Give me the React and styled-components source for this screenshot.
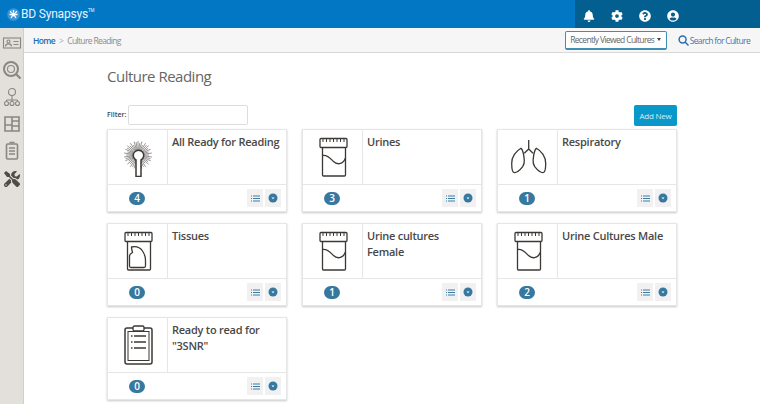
import React from "react";
import styled, { createGlobalStyle } from "styled-components";
import { FaBell, FaCog, FaQuestionCircle, FaUserCircle, FaTools } from "react-icons/fa";

const Global = createGlobalStyle`
  html, body { margin: 0; padding: 0; background: #fff; }
  body { font-family: "Open Sans", "Liberation Sans", sans-serif; overflow: hidden; }
  * { box-sizing: border-box; }
`;
const Page = styled.div`width: 760px; height: 404px; display: flex; flex-direction: column; overflow: hidden;`;
const Header = styled.header`height: 28px; background: #0277c4; display: flex; justify-content: space-between; flex: none;`;
const Brand = styled.div`display: flex; align-items: center; gap: 1px; padding-left: 7px; color: #e8f3fb; font-size: 12px; letter-spacing: -.2px; font-family: "Roboto", sans-serif;
  sup { font-size: 4.500px; margin: -8px 0 0 -1px; }`;
const HeaderTools = styled.div`width: 185px; background: #045f91; display: flex; align-items: center; gap: 12px; padding: 3px 0 0 6px; color: #fff;
  span { width: 16px; display: flex; justify-content: center; font-size: 12px; }`;
const Body = styled.div`display: flex; flex: 1; min-height: 0;`;
const Side = styled.nav`width: 24px; flex: none; background: #e3dfda; border-right: 1px solid #d2cfca; display: flex; flex-direction: column; align-items: center; padding-top: 5px; gap: 7px; color: #8a8782;`;
const SideIcon = styled.svg`width: 20px; height: 20px; display: block; fill: none; stroke: currentColor; stroke-width: ${(p) => p.$weight || 1.1};`;
const ToolSlot = styled.div`width: 20px; height: 20px; margin-top: 1px; display: flex; align-items: center; justify-content: center; color: #4e4b48; font-size: 16px;`;
const Main = styled.main`flex: 1; min-width: 0; display: flex; flex-direction: column;`;
const Crumbs = styled.div`height: 25px; flex: none; background: #f6f6f6; border-bottom: 1px solid #d8d8d8; display: flex; align-items: center; padding: 0 10px 0 9px; font-size: 8.5px; letter-spacing: -.65px; color: #8b8b8b; white-space: nowrap;`;
const Home = styled.a`color: #1f6db0; font-weight: 600;`;
const Sep = styled.span`margin: 0 4px; color: #aaa;`;
const Spacer = styled.div`flex: 1;`;
const Recent = styled.button`width: 102px; height: 19px; padding: 0; background: #fff; border: 1px solid #3f8fb4; border-bottom-width: 2px; border-radius: 2px; font: inherit; letter-spacing: inherit; color: #666; white-space: nowrap; display: flex; align-items: center; justify-content: center; gap: 3px;`;
const Caret = styled.i`border-top: 3px solid #444; border-left: 2.5px solid transparent; border-right: 2.5px solid transparent;`;
const Search = styled.div`display: flex; align-items: center; gap: 1px; margin-left: 11px; color: #3f78b0; svg { width: 11px; height: 11px; fill: none; stroke: #2a6cb0; stroke-width: 1.6; }`;
const Content = styled.div`padding: 12px 0 0 83px; width: 653px;`;
const Title = styled.h1`margin: 0; font-size: 15px; letter-spacing: -.5px; font-weight: 400; line-height: 22px; color: #666;`;
const FilterRow = styled.div`display: flex; align-items: flex-start; margin-top: 18px; height: 21px;`;
const FilterLabel = styled.label`width: 21px; line-height: 20px; font-size: 7px; font-weight: 600; color: #444;`;
const FilterInput = styled.div`width: 120px; height: 20px; border: 1px solid #ddd; border-radius: 2px; background: #fff;`;
const AddNew = styled.button`margin-left: auto; width: 43px; height: 21px; padding: 0; border: 0; border-radius: 2px; background: #0a97c9; color: #d6eef7; font: inherit; font-size: 8px; letter-spacing: -.2px;`;
const Grid = styled.div`display: grid; grid-template-columns: repeat(3, 180px); column-gap: 15px; row-gap: 11px; margin-top: 3px;`;
const Card = styled.section`height: 83px; background: #fff; border: 1px solid #e6e6e6; box-shadow: 0 1px 2px rgba(0,0,0,.22); display: flex; flex-direction: column;`;
const CardTop = styled.div`height: 55px; display: flex; border-bottom: 1px solid #e6e6e6;`;
const IconCell = styled.div`width: 60px; flex: none; border-right: 1px solid #e6e6e6; display: flex; align-items: center; justify-content: center; svg { width: 40px; height: 40px; fill: none; stroke: #3c3835; stroke-width: 1.3; }`;
const CardTitle = styled.h2`margin: 0; padding: 4px 4px 0 4px; font-size: 11px; letter-spacing: -.25px; line-height: 16px; font-weight: 600; color: #484848;`;
const CardFoot = styled.div`flex: 1; display: flex; align-items: center; padding: 0 5px 0 21px;`;
const Count = styled.span`width: 16px; height: 13px; border-radius: 7px; background: #37789f; color: #fff; font-size: 10px; font-weight: 600; line-height: 13px; text-align: center;`;
const FootBtn = styled.button`width: 16px; height: 18px; padding: 0; margin-left: 2px; border: 0; background: #f1f1f1; display: flex; align-items: center; justify-content: center; &:first-of-type { margin-left: auto; } svg { display: block; }`;

const Jar = ({ children }) => (
  <svg viewBox="0 0 40 40">
    <rect x="7" y="1.500" width="27" height="9" rx="1" />
    <path d="M10 1.500v3.500M13.500 1.500v3.500M17 1.500v3.500M20.500 1.500v3.500M24 1.500v3.500M27.500 1.500v3.500M31 1.500v3.500" strokeWidth="1" />
    <path d="M9.500 10.500V38a1 1 0 0 0 1 1h21a1 1 0 0 0 1-1V10.500" />
    {children}
  </svg>
);
const Wave = <path d="M9.500 18.500c5-1 8 3 11 6s9 4 12-3.500" />;
const Bag = <path d="M13 36.500c-1 0-1.500-.5-1.500-1.500V25c0-2 2-3 3-3.500-.5-2-1-3.500-1-5.500 5-1 9 1 11 4 2 3 3 6 3 9v6c0 1-.5 1.500-1.500 1.500z" />;
const rays = Array.from({ length: 44 }, (_, i) => {
  const a = (i / 44) * Math.PI * 2;
  const r = i % 2 ? 14 : 11 + (i % 3);
  return `M${(20 + 5 * Math.cos(a)).toFixed(1)} ${(18 + 5 * Math.sin(a)).toFixed(1)}L${(20 + r * Math.cos(a)).toFixed(1)} ${(18 + r * Math.sin(a)).toFixed(1)}`;
}).join("");
const Swab = (
  <svg viewBox="0 0 40 40">
    <path d={rays} stroke="#6d6965" strokeWidth=".7" />
    <path d="M18 39.500V23a5.200 5.200 0 1 1 5 0v16.500z" fill="#fff" strokeWidth="1.500" />
  </svg>
);
const Lungs = (
  <svg viewBox="0 0 40 40">
    <path d="M20.700 3v9M20.700 12l-4.400 4.300M20.700 12l4.300 4.300" />
    <path d="M13 11.300C8 14 3.500 20 3.700 26.500c0 4 .5 9 2.600 9.200 3 .2 6-3 8.400-6 1.500-2.500 1.800-4 1.600-6.700-.3-2-.5-5-1-6.700-.5-2-1-4.500-2.300-5zM28.400 11.300c5 2.700 9.500 8.700 9.300 15.200 0 4-.5 9-2.600 9.200-3 .2-6-3-8.400-6-1.500-2.500-1.800-4-1.600-6.700.3-2 .5-5 1-6.700.5-2 1-4.500 2.300-5z" />
  </svg>
);
const Clip = (
  <svg viewBox="0 0 40 40">
    <rect x="7" y="3" width="27" height="36" rx="2" strokeWidth="1.500" />
    <rect x="10" y="6.500" width="21" height="29" strokeWidth="1" />
    <rect x="15" y="1" width="11" height="5" rx="1.500" fill="#fff" />
    <path d="M16 11h12M16 17h12M16 23h12M13 11h1.500M13 17h1.500M13 23h1.500" />
  </svg>
);
const cards = [
  ["All Ready for Reading", 4, Swab],
  ["Urines", 3, <Jar>{Wave}</Jar>],
  ["Respiratory", 1, Lungs],
  ["Tissues", 0, <Jar>{Bag}</Jar>],
  ["Urine cultures Female", 1, <Jar>{Wave}</Jar>],
  ["Urine Cultures Male", 2, <Jar>{Wave}</Jar>],
  ['Ready to read for "3SNR"', 0, Clip],
];

export default function App() {
  return (
    <Page>
      <Global />
      <Header>
        <Brand>
          <svg width="13" height="13" viewBox="0 0 13 13"><circle cx="6.500" cy="6.500" r="6.300" fill="#3c96d6" /><path d="M6.500 2v2.500M3.200 3.200l1.500 2M9.800 3.200l-1.500 2M2.500 6.500H5M10.500 6.500H8M4 10l1.300-2M9 10L7.700 8" stroke="#fff" strokeWidth="1.300" /><circle cx="6.500" cy="6.500" r="2" fill="#fff" /></svg>
          BD Synapsys<sup>TM</sup>
        </Brand>
        <HeaderTools>
          <span><FaBell /></span><span><FaCog /></span><span><FaQuestionCircle /></span><span><FaUserCircle /></span>
        </HeaderTools>
      </Header>
      <Body>
        <Side>
          <SideIcon viewBox="0 0 20 20"><rect x="1.500" y="5" width="17" height="10" /><circle cx="6.500" cy="8.500" r="1.500" /><path d="M3.500 13.500c0-3.500 6-3.500 6 0M11.500 8.500h5M11.500 11.500h5" /></SideIcon>
          <SideIcon viewBox="0 0 20 20"><circle cx="9" cy="9" r="7" strokeWidth="2" /><circle cx="9" cy="9" r="3.500" /><path d="M14 14l4.500 4.500" strokeWidth="2.200" /></SideIcon>
          <SideIcon viewBox="0 0 20 20"><circle cx="10" cy="5" r="3.500" /><path d="M10 8.500V13M4.500 13h11M4.500 13v2M15.500 13v2M10 13v2" /><circle cx="4.500" cy="16.500" r="2" /><circle cx="15.500" cy="16.500" r="2" /><circle cx="10" cy="16.500" r="2" /></SideIcon>
          <SideIcon viewBox="0 0 20 20" $weight={1.6}><path d="M3 3h14v14H3zM10 3v14M3 11h7M10 7h7M10 12h7" /></SideIcon>
          <SideIcon viewBox="0 0 20 20" $weight={1.6}><rect x="4.500" y="3" width="11" height="15" rx="1" /><path d="M7.500 1.500h5M7 7h6M7 10h6M7 13h6" /></SideIcon>
          <ToolSlot><FaTools /></ToolSlot>
        </Side>
        <Main>
          <Crumbs>
            <Home>Home</Home><Sep>&gt;</Sep>Culture Reading
            <Spacer />
            <Recent>Recently Viewed Cultures <Caret /></Recent>
            <Search>
              <svg viewBox="0 0 12 12"><circle cx="5" cy="5" r="3.800" /><path d="M8 8l3.500 3.500" /></svg>
              Search for Culture
            </Search>
          </Crumbs>
          <Content>
            <Title>Culture Reading</Title>
            <FilterRow>
              <FilterLabel>Filter:</FilterLabel>
              <FilterInput />
              <AddNew>Add New</AddNew>
            </FilterRow>
            <Grid>
              {cards.map(([title, count, icon]) => (
                <Card key={title}>
                  <CardTop>
                    <IconCell>{icon}</IconCell>
                    <CardTitle>{title}</CardTitle>
                  </CardTop>
                  <CardFoot>
                    <Count>{count}</Count>
                    <FootBtn>
                      <svg width="9" height="7" viewBox="0 0 9 7"><path d="M0 1h1M2 1h7M0 3.500h1M2 3.500h7M0 6h1M2 6h7" stroke="#3d7da5" /></svg>
                    </FootBtn>
                    <FootBtn>
                      <svg width="10" height="10" viewBox="0 0 10 10"><circle cx="5" cy="5" r="4.500" fill="#37789f" /><path d="M3.500 4.500h3L5 6.200z" fill="#fff" /></svg>
                    </FootBtn>
                  </CardFoot>
                </Card>
              ))}
            </Grid>
          </Content>
        </Main>
      </Body>
    </Page>
  );
}
